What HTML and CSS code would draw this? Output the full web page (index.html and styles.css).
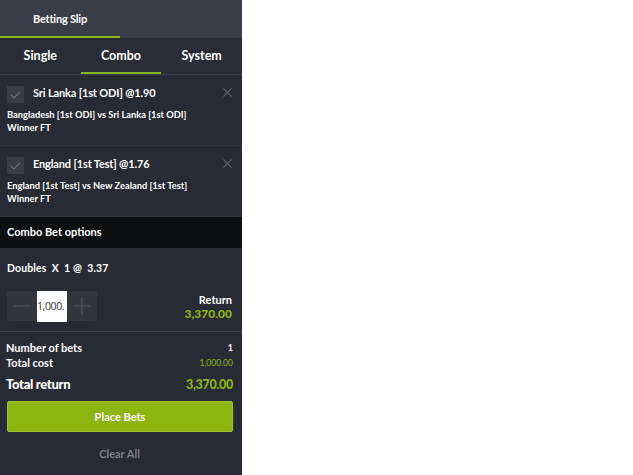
FILE: index.html
```html
<!DOCTYPE html>
<html lang="en">
<head>
  <meta charset="UTF-8">
  <title>Betting Slip</title>
  <link rel="stylesheet" href="styles.css">
</head>
<body>
  <div class="slip">
    <div class="slip-header">
      <div class="slip-title">Betting Slip</div>
    </div>

    <div class="tabs">
      <div class="tab">Single</div>
      <div class="tab active">Combo</div>
      <div class="tab">System</div>
    </div>

    <div class="bet">
      <div class="bet-head">
        <span class="check">
          <svg width="11" height="8" viewBox="0 0 11 8"><path d="M1 4 L4 7 L10 1" fill="none" stroke="#6c6f78" stroke-width="1.2"/></svg>
        </span>
        <span class="bet-name">Sri Lanka [1st ODI] @1.90</span>
        <span class="close">
          <svg width="9" height="9" viewBox="0 0 9 9"><path d="M0.5 0.5 L8.5 8.5 M8.5 0.5 L0.5 8.5" stroke="#5d606a" stroke-width="1.1"/></svg>
        </span>
      </div>
      <div class="bet-desc">Bangladesh [1st ODI] vs Sri Lanka [1st ODI]<br>Winner FT</div>
    </div>

    <div class="bet">
      <div class="bet-head">
        <span class="check">
          <svg width="11" height="8" viewBox="0 0 11 8"><path d="M1 4 L4 7 L10 1" fill="none" stroke="#6c6f78" stroke-width="1.2"/></svg>
        </span>
        <span class="bet-name">England [1st Test] @1.76</span>
        <span class="close">
          <svg width="9" height="9" viewBox="0 0 9 9"><path d="M0.5 0.5 L8.5 8.5 M8.5 0.5 L0.5 8.5" stroke="#5d606a" stroke-width="1.1"/></svg>
        </span>
      </div>
      <div class="bet-desc">England [1st Test] vs New Zealand [1st Test]<br>Winner FT</div>
    </div>

    <div class="options-title">Combo Bet options</div>

    <div class="combo">
      <div class="combo-label">Doubles&nbsp; X&nbsp; 1 @&nbsp; 3.37</div>
      <div class="stake-row">
        <div class="stepper">
          <span class="step">
            <svg width="18" height="2" viewBox="0 0 18 2"><path d="M0 1 H18" stroke="#555862" stroke-width="1"/></svg>
          </span>
          <span class="stake">1,000.</span>
          <span class="step">
            <svg width="18" height="18" viewBox="0 0 18 18"><path d="M0 9 H18 M9 0 V18" stroke="#555862" stroke-width="1"/></svg>
          </span>
        </div>
        <div class="return">
          <div class="return-label">Return</div>
          <div class="return-value">3,370.00</div>
        </div>
      </div>
    </div>

    <div class="summary">
      <div class="sum-row"><span>Number of bets</span><span class="plain">1</span></div>
      <div class="sum-row"><span>Total cost</span><span class="small-green">1,000.00</span></div>
      <div class="sum-row total"><span>Total return</span><span class="green">3,370.00</span></div>
      <button class="place-btn">Place Bets</button>
      <div class="clear">Clear All</div>
    </div>
  </div>
</body>
</html>
```

FILE: styles.css
```css
body {
  margin: 0;
  background: white;
  font-family: Lato, "Open Sans", sans-serif;
  color: white;
}

.slip {
  width: 242px;
  height: 475px;
  background-color: #282b33;
}

.slip-header {
  background-color: #3b3e48;
  height: 38px;
}

.slip-title {
  width: 120px;
  height: 36px;
  line-height: 37px;
  text-align: center;
  font-size: 11px;
  font-weight: 700;
  border-bottom: 2px solid #8cb414;
  letter-spacing: -0.2px;
}

.tabs {
  display: flex;
  background-color: #2a2d35;
  border-bottom: 1px solid #3a3d45;
}

.tab {
  flex: 1;
  height: 34px;
  line-height: 35px;
  text-align: center;
  font-size: 12.5px;
  font-weight: 700;
  border-bottom: 2px solid transparent;
}

.tab.active {
  border-bottom-color: #8cb414;
}

.bet {
  padding: 11px 10px 0 7px;
  height: 59px;
  border-bottom: 1px solid #33363f;
}

.bet-head {
  display: flex;
  align-items: center;
  height: 17px;
}

.check {
  width: 17px;
  height: 17px;
  background-color: #3a3d46;
  display: flex;
  align-items: center;
  justify-content: center;
  margin-right: 9px;
}

.bet-name {
  flex: 1;
  font-size: 11px;
  font-weight: 700;
  margin-top: -5px;
  letter-spacing: -0.15px;
}

.close {
  display: flex;
  margin-top: -4px;
}

.bet-desc {
  margin-top: 5px;
  font-size: 9.3px;
  font-weight: 700;
  line-height: 13px;
}

.options-title {
  background-color: #0e0f11;
  height: 31px;
  line-height: 30px;
  padding-left: 7px;
  font-size: 11px;
  font-weight: 700;
}

.combo {
  padding: 14px 10px 10px 7px;
  border-bottom: 1px solid #3a3d45;
}

.combo-label {
  font-size: 10.5px;
  font-weight: 700;
  height: 16px;
  letter-spacing: 0.1px;
}

.stake-row {
  display: flex;
  justify-content: space-between;
  align-items: center;
  margin-top: 13px;
}

.stepper {
  display: flex;
  background-color: #33363f;
  border-radius: 3px;
  height: 30px;
  width: 90px;
}

.step {
  width: 30px;
  display: flex;
  align-items: center;
  justify-content: center;
}

.stake {
  width: 30px;
  height: 31px;
  background: white;
  color: #333;
  font-size: 10.5px;
  line-height: 31px;
  overflow: hidden;
  white-space: nowrap;
  font-family: "Open Sans", sans-serif;
  letter-spacing: -0.4px;
}

.return {
  text-align: right;
  margin-top: 2px;
}

.return-label {
  font-size: 11px;
  font-weight: 700;
  line-height: 13px;
}

.return-value {
  color: #8cb414;
  font-size: 12px;
  font-weight: 900;
  line-height: 15px;
}

.summary {
  padding: 8px 9px 0 6px;
}

.sum-row {
  display: flex;
  justify-content: space-between;
  align-items: center;
  font-size: 11px;
  font-weight: 700;
  height: 15px;
}

.plain {
  font-size: 9px;
}

.small-green {
  color: #8cb414;
  font-size: 8.5px;
  font-weight: 400;
}

.total {
  font-size: 13px;
  font-weight: 900;
  height: 20px;
  margin-top: 4px;
  letter-spacing: -0.3px;
}

.green {
  color: #8cb414;
  font-size: 12.5px;
}

.place-btn {
  display: block;
  width: 226px;
  height: 31px;
  margin: 7px 0 0 1px;
  background-color: #8db510;
  border: 1px solid #a2c22a;
  border-radius: 2px;
  color: white;
  font-family: Lato, sans-serif;
  font-size: 11px;
  font-weight: 700;
}

.clear {
  text-align: center;
  color: #7c7f88;
  font-size: 11px;
  font-weight: 700;
  margin-top: 15px;
}
```
